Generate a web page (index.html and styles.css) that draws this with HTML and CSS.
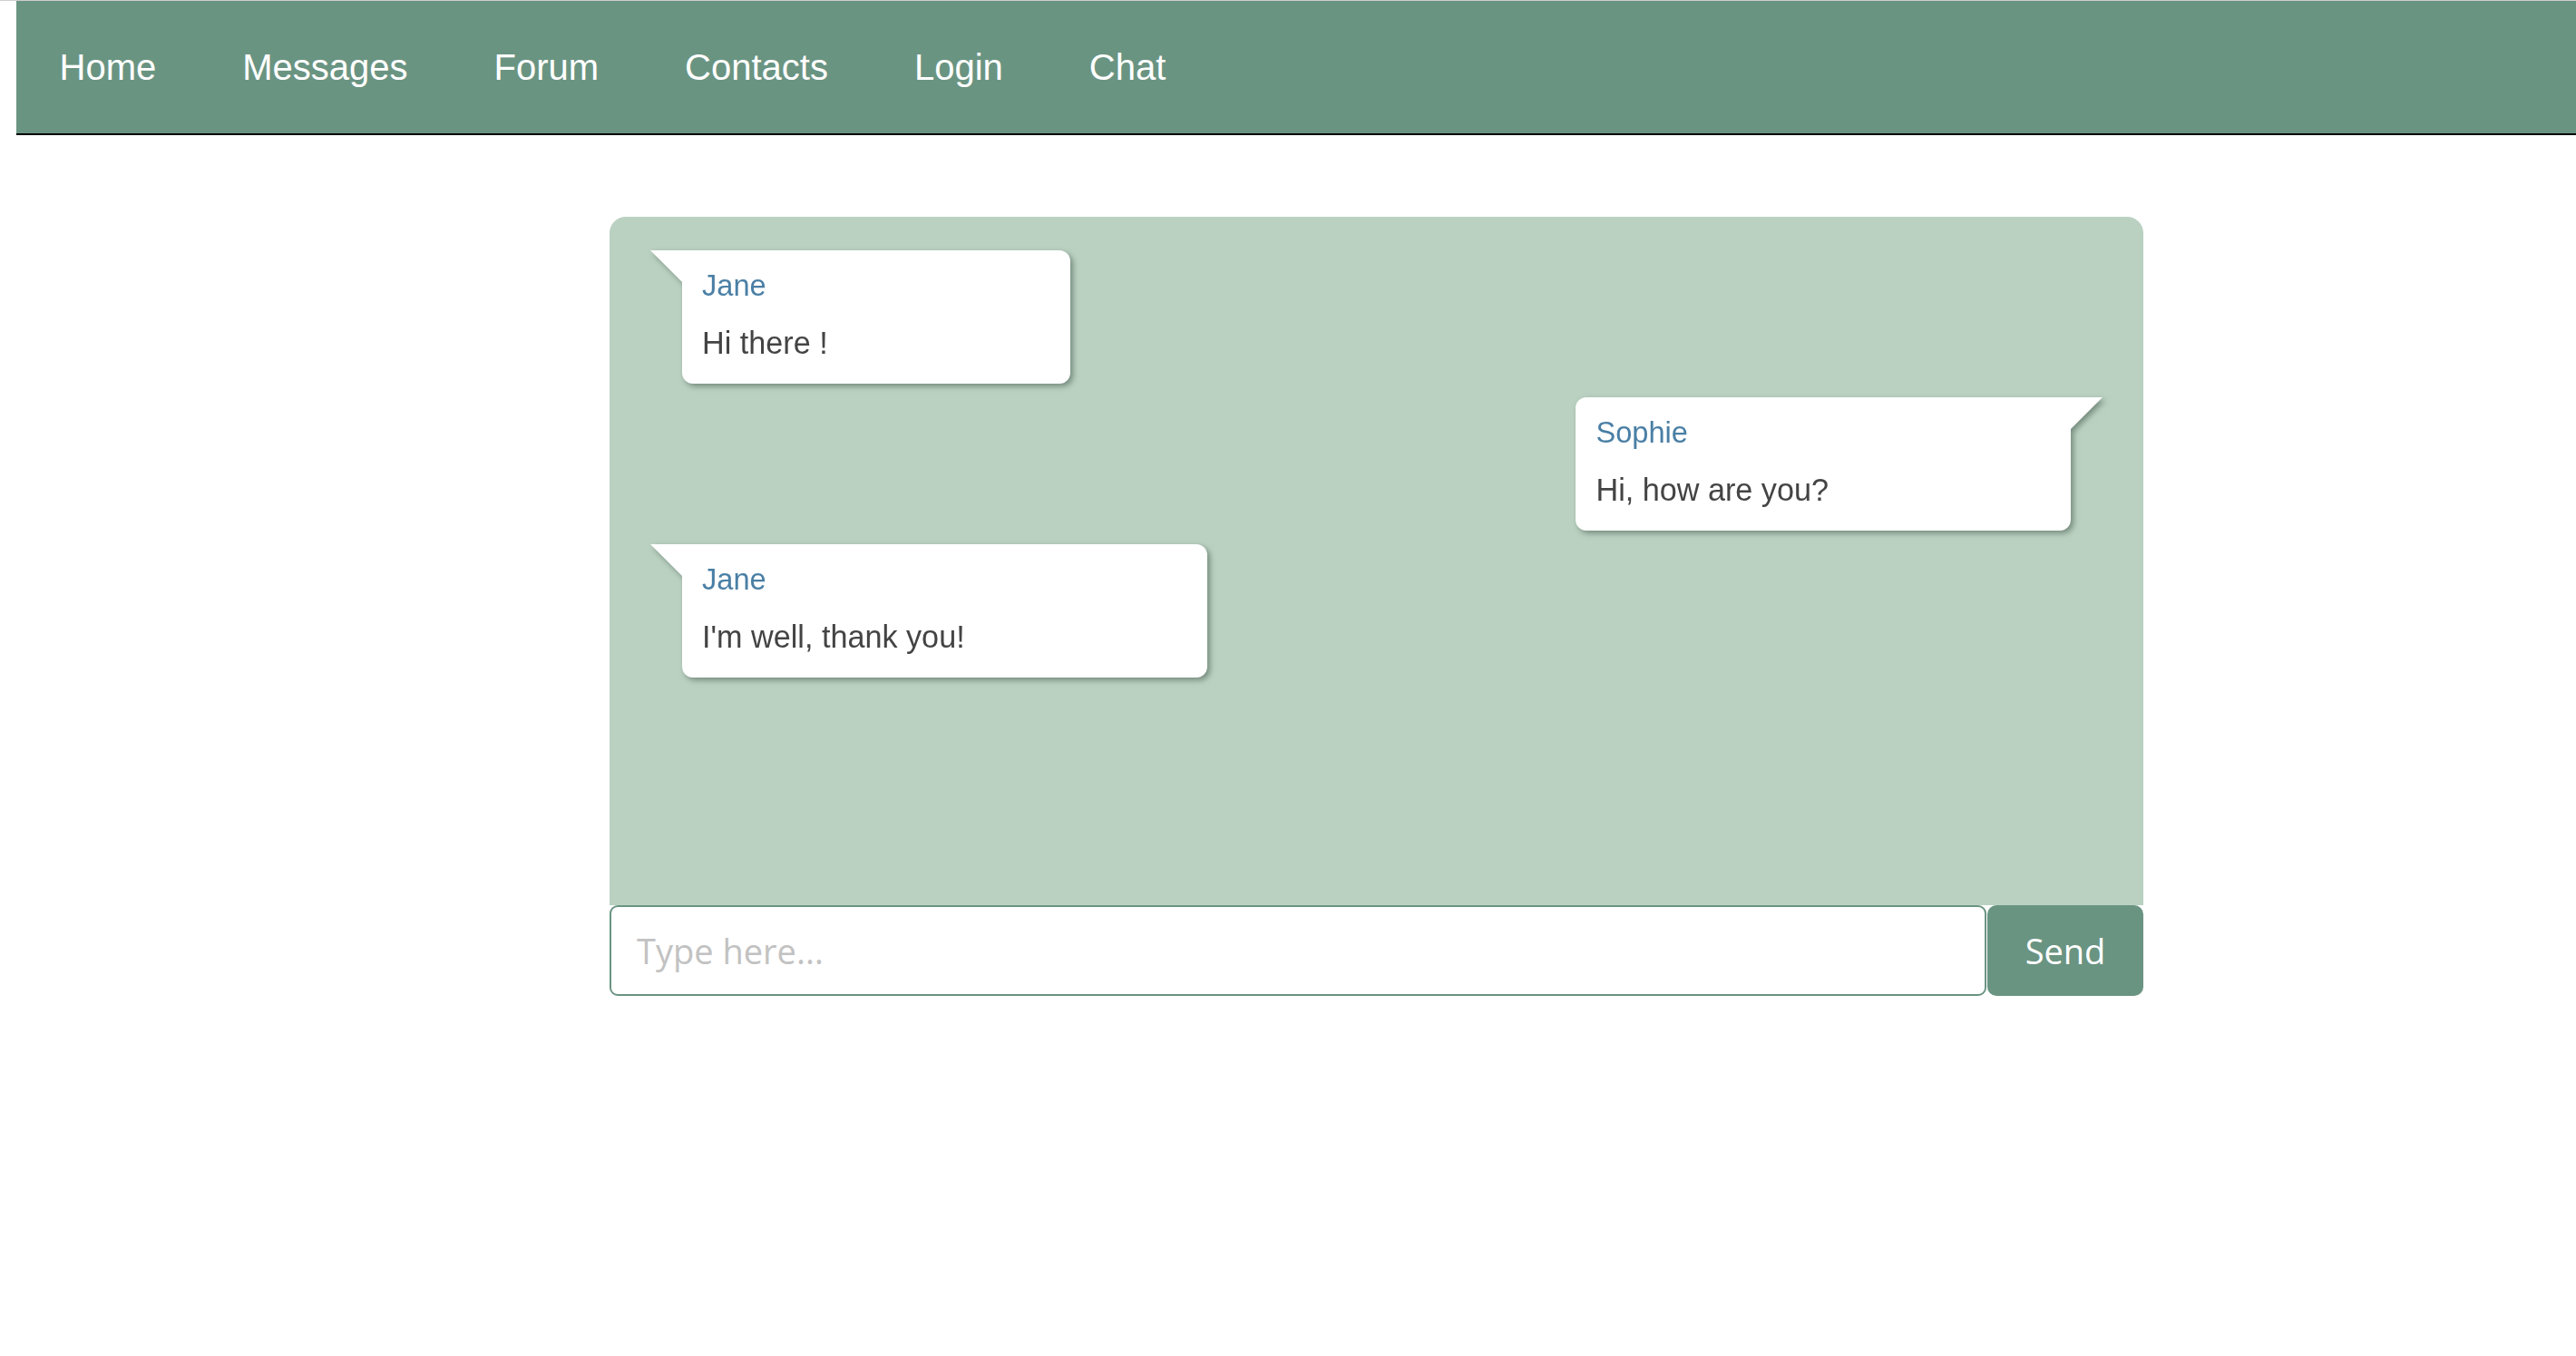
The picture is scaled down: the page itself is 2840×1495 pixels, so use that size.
FILE: index.html
```html
<!DOCTYPE html>
<html lang="en">
<head>
<meta charset="utf-8">
<title>Chat</title>
<link rel="stylesheet" href="styles.css">
</head>
<body>
<nav class="topnav">
  <a class="nav-link" href="#">Home</a>
  <a class="nav-link" href="#">Messages</a>
  <a class="nav-link" href="#">Forum</a>
  <a class="nav-link" href="#">Contacts</a>
  <a class="nav-link" href="#">Login</a>
  <a class="nav-link" href="#">Chat</a>
</nav>
<main class="chat">
  <section class="messages">
    <div class="bubble left">
      <div class="name">Jane</div>
      <div class="text">Hi there !</div>
    </div>
    <div class="bubble right">
      <div class="name">Sophie</div>
      <div class="text">Hi, how are you?</div>
    </div>
    <div class="bubble left">
      <div class="name">Jane</div>
      <div class="text">I'm well, thank you!</div>
    </div>
  </section>
  <form class="composer">
    <input class="composer-input" type="text" placeholder="Type here...">
    <button class="composer-send" type="button">Send</button>
  </form>
</main>
</body>
</html>
```

FILE: styles.css
```css
html, body {
  margin: 0;
  padding: 0;
  background: #ffffff;
}

body {
  border-top: 1px solid #cfcfcf;
  font-family: "Liberation Sans", Arial, sans-serif;
}

.topnav {
  margin-left: 18px;
  height: 146px;
  background: #6a9482;
  border-bottom: 2px solid #000;
  display: flex;
  align-items: center;
  padding-left: 0;
}

.nav-link {
  color: #ffffff;
  text-decoration: none;
  font-size: 40px;
  padding: 0 47.5px;
  line-height: 1;
}

.chat {
  width: 1691px;
  margin: 90px 0 0 672px;
}

.messages {
  background: #bad1c1;
  height: 759px;
  box-sizing: border-box;
  border-radius: 18px 18px 0 0;
  padding: 37px 45px;
  display: flex;
  flex-direction: column;
  align-items: flex-start;
  gap: 15px;
}

.bubble {
  position: relative;
  background: #ffffff;
  border-radius: 12px;
  padding: 20px 267px 25px 22px;
  filter: drop-shadow(3px 3px 3px rgba(60, 80, 70, 0.55));
}

.bubble.left {
  margin-left: 35px;
  border-top-left-radius: 0;
}

.bubble.right {
  align-self: flex-end;
  margin-right: 35px;
  border-top-right-radius: 0;
}

.bubble::before {
  content: "";
  position: absolute;
  top: 0;
  width: 0;
  height: 0;
  border-top: 35px solid #ffffff;
}

.bubble.left::before {
  left: -35px;
  border-left: 35px solid transparent;
}

.bubble.right::before {
  right: -35px;
  border-right: 35px solid transparent;
}

.name {
  color: #4a7fa5;
  font-size: 32.6px;
  line-height: 37px;
}

.text {
  color: #444444;
  font-size: 34.2px;
  line-height: 40px;
  margin-top: 25px;
  white-space: nowrap;
}

.composer {
  display: flex;
  gap: 1px;
  margin: 0;
}

.composer-input {
  flex: 1;
  height: 100px;
  box-sizing: border-box;
  border: 2px solid #6a9482;
  border-radius: 9px;
  padding: 0 28px;
  font-family: "Open Sans", sans-serif;
  font-size: 38px;
  color: #333;
  outline: none;
}

.composer-input::placeholder {
  color: #c2c2c2;
}

.composer-send {
  width: 172px;
  height: 100px;
  border: none;
  border-radius: 10px;
  background: #6a9482;
  color: #ffffff;
  font-family: "Open Sans", sans-serif;
  font-size: 38px;
  padding: 0;
}
```
